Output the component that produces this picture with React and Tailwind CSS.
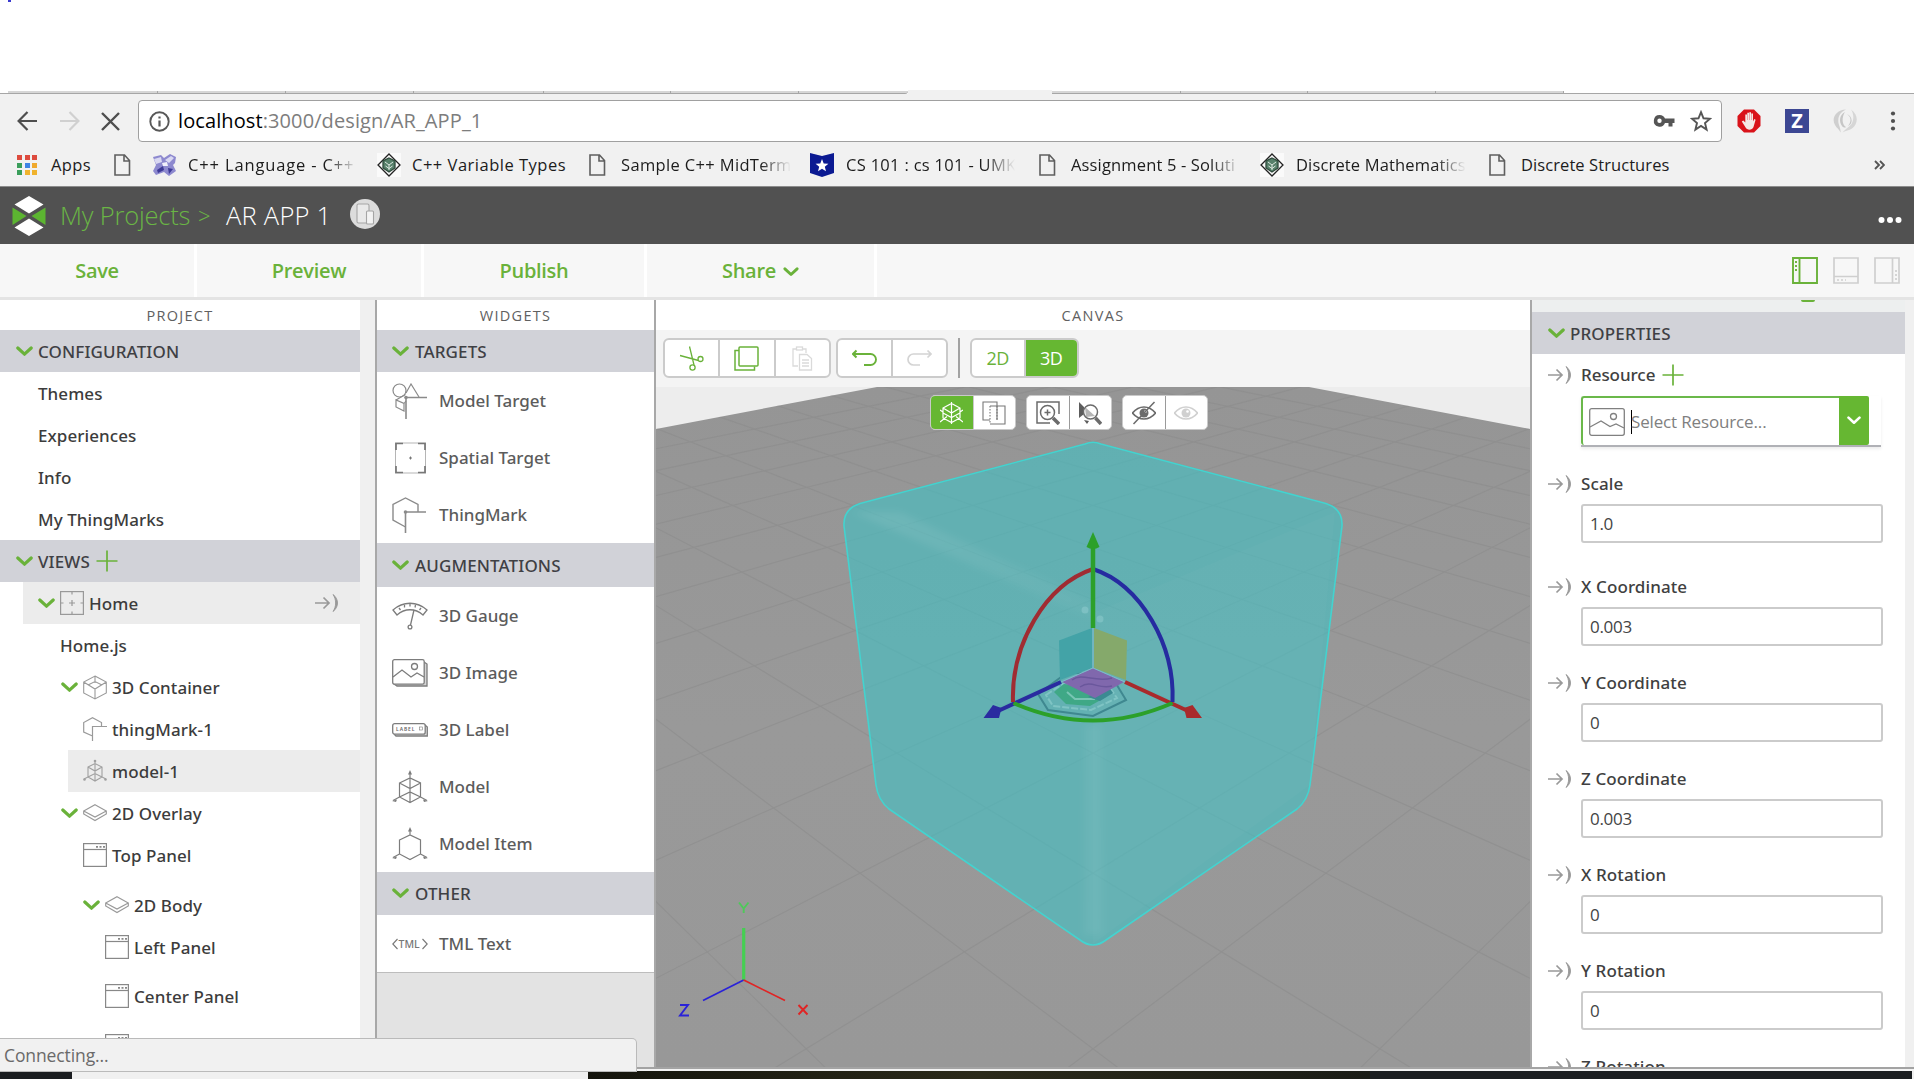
import React from "react";

const GREEN = "#6ab23a";

function Icon({ w, h, vb, className = "", children, stroke = "#8a8a8a", sw = 1.2 }) {
  return (
    <svg
      width={w}
      height={h}
      viewBox={vb || `0 0 ${w} ${h}`}
      className={"shrink-0 block " + className}
      fill="none"
      stroke={stroke}
      strokeWidth={sw}
    >
      {children}
    </svg>
  );
}

const Chevron = ({ className = "", color = GREEN, w = 17, h = 11 }) => (
  <Icon w={w} h={h} vb="0 0 17 11" stroke={color} sw={3.2} className={className}>
    <path d="M1.8 2 L8.5 8.2 L15.2 2" strokeLinecap="round" strokeLinejoin="round" />
  </Icon>
);

const Plus = ({ className = "" }) => (
  <Icon w={22} h={22} stroke={GREEN} sw={1.7} className={className}>
    <path d="M11 0.5V21.5M0.5 11H21.5" />
  </Icon>
);

const Bind = ({ className = "" }) => (
  <Icon w={25} h={20} stroke="#999" sw={1.7} className={className}>
    <path d="M1 10H14.5M9.5 4.5L15 10L9.5 15.5" />
    <path d="M19 1.5C25 6 25 14 19 18.5C22.5 13.5 22.5 6.5 19 1.5Z" fill="#999" strokeWidth="0.9" />
  </Icon>
);

/* ---------- browser chrome ---------- */

const PageIcon = () => (
  <Icon w={17} h={22} stroke="#5f5f5f" sw={1.6}>
    <path d="M1 1H10.5L15.5 6.5V21H1Z M10 1V7H15.5" />
  </Icon>
);

const DiamondIcon = () => (
  <Icon w={24} h={24} stroke="#222" sw={1.3}>
    <rect width="24" height="24" fill="#fafafa" stroke="none" />
    <path d="M12 1L23 12L12 23L1 12Z" />
    <path d="M12 5L18 8V15L12 19L6 15V8Z" fill="#56806a" stroke="#2f4a3c" />
    <path d="M8 9L12 12L16 9M12 12V17M8.5 13L12 15.5L15.500 13" stroke="#dfe9e2" strokeWidth="1" />
  </Icon>
);

const CppIcon = () => (
  <Icon w={25} h={22} stroke="none">
    <path d="M1 3L9 1L12 4L18 0L24 3L23 9L21 11L24 17L17 22L12 18L4 21L1 17L4 11Z" fill="#8d89cf" />
    <path d="M2 5L9 3L10 8L4 10ZM13 6L19 2L22 4L17 9Z" fill="#d9d8f2" />
    <path d="M5 16L11 12L12 16L6 19ZM16 14L21 15L17 20Z" fill="#3e3a97" />
    <path d="M10 9L15 8L16 12L11 12Z" fill="#f0f0fb" />
  </Icon>
);

const ShieldStar = () => (
  <Icon w={24} h={24} stroke="none">
    <path d="M0 0L12 3L24 0V20L12 24L0 20Z" fill="#0b1a92" />
    <path d="M12 6L13.700 10.400L18.400 10.700L14.800 13.700L16 18.300L12 15.700L8 18.300L9.200 13.700L5.600 10.700L10.300 10.400Z" fill="#fff" />
  </Icon>
);

function Bookmark({ icon, label, gap, width, fade, ml, tracking }) {
  return (
    <div className={"flex items-center shrink-0 " + ml}>
      {icon}
      <span
        className={
          "block whitespace-nowrap overflow-hidden text-[16.500px] text-[#1c1c1c] leading-6 " +
          gap + " " + width + " " + tracking + " " +
          (fade ? "[mask-image:linear-gradient(to_right,black_82%,transparent_100%)]" : "")
        }
      >
        {label}
      </span>
    </div>
  );
}

function TabStrip() {
  return (
    <div className="flex h-[4px] shrink-0 mt-[90px] bg-white">
      <div className="w-2 border-b border-[#a6a6a6]" />
      {[150, 128, 128, 130, 127, 128].map((w, i) => (
        <div key={i} style={{ width: w }} className="bg-[#d6d6d6] border-b border-r border-[#a6a6a6] h-[3px] mt-px" />
      ))}
      <div className="w-[109px] bg-[#d6d6d6] border-b border-[#a6a6a6] rounded-br-sm h-[3px] mt-px" />
      <div className="w-[144px] bg-[#f1f1f1]" />
      {[129, 127, 128, 128].map((w, i) => (
        <div key={i} style={{ width: w }} className="bg-[#d6d6d6] border-b border-r border-[#a6a6a6] h-[3px] mt-px" />
      ))}
      <div className="flex-1 border-b border-[#a6a6a6]" />
    </div>
  );
}

function AddressBar() {
  return (
    <div className="flex items-center h-[54px] shrink-0">
      <Icon w={20} h={20} stroke="#4e4e4e" sw={2.2} className="ml-[17px]">
        <path d="M20 10H2M10.500 1L1.600 10L10.500 19" />
      </Icon>
      <Icon w={20} h={20} stroke="#d0d0d0" sw={2.200} className="ml-[23px]">
        <path d="M0 10H18M9.500 1L18.400 10L9.500 19" />
      </Icon>
      <Icon w={19} h={19} stroke="#4e4e4e" sw={2.400} className="ml-[21px]">
        <path d="M1 1L18 18M18 1L1 18" />
      </Icon>
      <div className="ml-[18px] w-[1584px] h-[42px] bg-white border border-[#a0a0a0] rounded-[4px] flex items-center">
        <Icon w={21} h={21} stroke="#585858" sw={1.900} className="ml-[10px]">
          <circle cx="10.500" cy="10.500" r="9.200" />
          <path d="M10.500 9.500V15.500M10.500 5.500V7.600" strokeWidth="2.200" />
        </Icon>
        <div className="ml-[8px] text-[20px] leading-7 text-[#7d7d7d] flex-1 whitespace-nowrap tracking-[0.100px]">
          <span className="text-black">localhost</span>:3000/design/AR_APP_1
        </div>
        <Icon w={22} h={14} stroke="none" className="mr-[15px]">
          <path fillRule="evenodd" d="M6.500 1A5.800 5.800 0 1 0 12 9H15.500V12.500H19.500V9H21.500V4.500H12A5.800 5.800 0 0 0 6.500 1ZM6.500 4.600A2.200 2.200 0 1 1 6.500 9A2.200 2.200 0 1 1 6.500 4.600Z" fill="#555" />
        </Icon>
        <Icon w={22} h={22} stroke="#555" sw={1.900} className="mr-[9px]">
          <path d="M11 2.200L13.500 8.300L20 8.800L15 13L16.600 19.600L11 16L5.400 19.600L7 13L2 8.800L8.500 8.300Z" />
        </Icon>
      </div>
      <Icon w={24} h={24} stroke="none" className="ml-[15px]">
        <path d="M7 0.500H17L23.500 7V17L17 23.500H7L0.500 17V7Z" fill="#d9131a" />
        <path d="M8.300 18L4.800 12.500L6.300 11.500L8.300 13.500V5.500H10V11H10.300V3.700H12V11H12.300V3.200H14V11H14.300V4.500H16V12.500L17.300 10L18.600 10.700L16.500 18C15 21.500 10 21.500 8.300 18Z" fill="#f4e9e6" />
      </Icon>
      <div className="ml-[24px] w-6 h-6 bg-[#3c4793] text-white font-bold text-[20px] leading-6 text-center shrink-0">Z</div>
      <Icon w={24} h={24} stroke="none" className="ml-[24px]">
        <path d="M13 0.500C3 1 -2 9 2 16C3.500 19 6 20 7.500 23.500C8 20 6 17 5.500 14C4.500 8 7 3 13 0.500Z" fill="#cfcfcf" />
        <path d="M18 0.500C26 6 25 15 19 19.500C16 21.500 13 21.500 9.500 23.500C12 20 16 18.500 18.500 15C21 11 21 5 18 0.500Z" fill="#d6d6d6" />
        <path d="M12 3C6 6 6 13 9 17C10 18.500 12 19 13 18C9 16 8.500 8 12 3ZM14 5C18 8 19 12 15 17C20 15 20 8 14 5Z" fill="#c6c6c6" />
      </Icon>
      <Icon w={6} h={20} stroke="none" className="ml-[33px]">
        <circle cx="3" cy="2.500" r="2.100" fill="#505050" />
        <circle cx="3" cy="10" r="2.100" fill="#505050" />
        <circle cx="3" cy="17.500" r="2.100" fill="#505050" />
      </Icon>
    </div>
  );
}

function BookmarksBar() {
  const colors = ["#dd4b3e", "#dd4b3e", "#dd4b3e", "#3a9e5b", "#3f84e5", "#f0a92d", "#3a9e5b", "#f0b32d", "#f0b32d"];
  return (
    <div className="flex items-center h-[38px] shrink-0 pb-[4px]">
      <div className="grid grid-cols-3 gap-[2.500px] ml-[17px] w-5 shrink-0">
        {colors.map((c, i) => (
          <div key={i} className="h-[5px]" style={{ background: c }} />
        ))}
      </div>
      <span className="ml-[14px] w-[63px] text-[16.500px] text-[#1c1c1c] leading-6 tracking-[0.400px]">Apps</span>
      <PageIcon />
      <Bookmark ml="ml-[21px]" icon={<CppIcon />} gap="ml-[11px]" width="w-[170px]" tracking="tracking-[0.850px]" label="C++ Language - C++" fade />
      <Bookmark ml="ml-[19px]" icon={<DiamondIcon />} gap="ml-[11px]" width="w-[160px]" tracking="tracking-[0.500px]" label="C++ Variable Types" />
      <Bookmark ml="ml-[17px]" icon={<PageIcon />} gap="ml-[15px]" width="w-[170px]" tracking="tracking-[0.350px]" label="Sample C++ MidTerm" fade />
      <Bookmark ml="ml-[19px]" icon={<ShieldStar />} gap="ml-[12px]" width="w-[169px]" tracking="tracking-[0.300px]" label="CS 101 : cs 101 - UMK" fade />
      <Bookmark ml="ml-[24px]" icon={<PageIcon />} gap="ml-[15px]" width="w-[170px]" tracking="tracking-[0.150px]" label="Assignment 5 - Soluti" fade />
      <Bookmark ml="ml-[19px]" icon={<DiamondIcon />} gap="ml-[12px]" width="w-[170px]" tracking="tracking-[0.150px]" label="Discrete Mathematics" fade />
      <Bookmark ml="ml-[23px]" icon={<PageIcon />} gap="ml-[15px]" width="w-[170px]" tracking="tracking-[0.080px]" label="Discrete Structures" />
      <Icon w={11} h={10} stroke="#555" sw={1.900} className="ml-auto mr-[29px]">
        <path d="M1 1L5 5L1 9M6 1L10 5L6 9" />
      </Icon>
    </div>
  );
}

/* ---------- application header ---------- */

function AppHeader() {
  return (
    <div className="flex items-center h-[58px] shrink-0 bg-[#515151] border-t border-[#8c8c8c]">
      <Icon w={34} h={40} stroke="none" className="ml-[12px]">
        <path d="M17 0L31.500 8.500L17 17.500L2.500 8.500Z M17 22.500L31.500 31.500L17 40L2.500 31.500Z" fill="#fff" />
        <path d="M0.500 11.500V29L14.500 20Z M33.500 11.500V29L19.500 20Z" fill="#5cb531" />
      </Icon>
      <div className="flex ml-[14px] pb-[2px] text-[25.500px] font-light leading-8 whitespace-nowrap">
        <span className="text-[#6ab545] w-[138px] tracking-[-0.200px]">My Projects</span>
        <span className="text-[#6ab545] w-[28px] text-[22px]">&gt;</span>
        <span className="text-white w-[124px] tracking-[0.250px]">AR APP 1</span>
      </div>
      <Icon w={30} h={30} stroke="#a5a5a5" sw={1.100} className="mb-[4px]">
        <circle cx="15" cy="15" r="15" fill="#dcdcdc" stroke="none" />
        <rect x="7" y="5" width="12" height="19" rx="1.500" fill="#e9e9e9" />
        <rect x="16.500" y="12" width="7" height="13" rx="1" fill="#f3f3f3" />
      </Icon>
      <Icon w={24} h={6} stroke="none" className="ml-auto mr-[12px] mt-[8px]">
        <circle cx="3.500" cy="3" r="3" fill="#fff" />
        <circle cx="12" cy="3" r="3" fill="#fff" />
        <circle cx="20.500" cy="3" r="3" fill="#fff" />
      </Icon>
    </div>
  );
}

function ActionBar() {
  const cell = "h-full flex items-center justify-center border-r-[3px] border-white shrink-0 pt-px ";
  return (
    <div className="flex items-center h-[56px] shrink-0 bg-[#f7f7f7] border-b-[3px] border-[#e4e4e4] text-[20px] font-semibold text-[#6ab23a] tracking-[-0.300px]">
      <div className={cell + "w-[197px]"}>Save</div>
      <div className={cell + "w-[227px]"}>Preview</div>
      <div className={cell + "w-[223px]"}>Publish</div>
      <div className={cell + "w-[230px]"}>
        Share
        <Chevron className="ml-[7px] mt-[2px]" w={16} h={10} />
      </div>
      <div className="ml-auto mr-[14px] flex gap-[15px]">
        <Icon w={26} h={27} stroke={GREEN} sw={1.900}>
          <path d="M1 1H25V26H1ZM7.500 1V26" />
          <path d="M4 4V14" strokeDasharray="2 2" />
        </Icon>
        <Icon w={26} h={27} stroke="#cfcfcf" sw={1.700}>
          <path d="M1 1H25V26H1ZM1 19.500H25" />
          <path d="M4 23H13" strokeDasharray="2 2" />
        </Icon>
        <Icon w={26} h={27} stroke="#cfcfcf" sw={1.700}>
          <path d="M1 1H25V26H1ZM18.500 1V26" />
          <path d="M22 13V23" strokeDasharray="2 2" />
        </Icon>
      </div>
    </div>
  );
}

/* ---------- project tree ---------- */

const PanelTitle = ({ children, className = "" }) => (
  <div className={"h-[30px] shrink-0 bg-white flex items-center justify-center pt-px text-[14.500px] text-[#606060] tracking-[1.300px] " + className}>
    {children}
  </div>
);

const Section = ({ label, className = "h-[42px] pl-[16px]", plus, gap = "ml-[5px]" }) => (
  <div className={"bg-[#d1d2d8] flex items-center shrink-0 text-[17px] font-medium font-['Noto_Sans','Open_Sans',sans-serif] text-[#3f4044] " + className}>
    <Chevron />
    <span className={"tracking-[0.120px] pt-px " + gap}>{label}</span>
    {plus && <Plus className="ml-[6px]" />}
  </div>
);

const ViewIcon = () => (
  <Icon w={24} h={24} stroke="#999" sw={1.200}>
    <rect x="0.600" y="0.600" width="22.800" height="22.800" />
    <path d="M12 1V3.500M12 20.500V23M1 12H3.500M20.500 12H23M12 9V15M9 12H15" />
  </Icon>
);
const ContainerIcon = () => (
  <Icon w={24} h={25} stroke="#9a9a9a" sw={1.100}>
    <path d="M12 1L23.300 7V18L12 24L0.700 18V7ZM12 1V8M0.700 7L12 14L23.300 7M12 14V24M5 10L12 6.500L19 10" />
  </Icon>
);
const MarkSmall = () => (
  <Icon w={24} h={24} stroke="#9a9a9a" sw={1.200}>
    <path d="M9.500 19L0.700 15V5.500L9.500 0.700L18.500 5.500V9.500M9.500 24V9.500H24" />
  </Icon>
);
const ModelSmall = () => (
  <Icon w={24} h={24} stroke="#a0a0a0" sw={1.100}>
    <path d="M12 2V22M5 8L12 4.500L19 8V18L12 22L5 18ZM5 8L12 12L19 8M5 18L12 14.500L19 18M5 18L1 20M19 18L23 20" />
    <circle cx="12" cy="2" r="1.300" fill="#a0a0a0" stroke="none" />
    <circle cx="1.500" cy="20.500" r="1.300" fill="#a0a0a0" stroke="none" />
    <circle cx="22.500" cy="20.500" r="1.300" fill="#a0a0a0" stroke="none" />
  </Icon>
);
const LayersIcon = () => (
  <Icon w={24} h={18} stroke="#999" sw={1.200}>
    <path d="M12 0.800L23.300 7L12 13L0.700 7ZM0.700 7V10L12 16.500L23.300 10V7" />
  </Icon>
);
const WindowIcon = () => (
  <Icon w={24} h={24} stroke="#888" sw={1.200}>
    <rect x="0.600" y="0.600" width="22.800" height="22.800" />
    <path d="M1 6.500H23" />
    <path d="M13 3.800H22" strokeDasharray="2 1.500" strokeWidth="1.800" />
  </Icon>
);

const TreeRow = ({ label, icon, open, pad, className = "h-[42px]", textGap = "ml-[5px]", children }) => (
  <div className={"flex items-center shrink-0 text-[17px] text-[#3c3c3c] font-medium font-['Noto_Sans','Open_Sans',sans-serif] leading-6 tracking-[0.070px] " + pad + " " + className}>
    {open && <Chevron className="mr-[5px]" />}
    {icon}
    <span className={"pt-px " + (icon ? textGap : "")}>{label}</span>
    {children}
  </div>
);

function ProjectPanel() {
  return (
    <div className="w-[375px] shrink-0 flex bg-[#f0f0f0] overflow-hidden">
      <div className="w-[360px] bg-white flex flex-col overflow-hidden">
        <PanelTitle>PROJECT</PanelTitle>
        <Section label="CONFIGURATION" />
        <TreeRow pad="pl-[38px]" label="Themes" />
        <TreeRow pad="pl-[38px]" label="Experiences" />
        <TreeRow pad="pl-[38px]" label="Info" />
        <TreeRow pad="pl-[38px]" label="My ThingMarks" />
        <Section label="VIEWS" plus />
        <TreeRow pad="ml-[23px] pl-[15px] bg-[#ececec]" open icon={<ViewIcon />} label="Home">
          <Bind className="ml-auto mr-[21px]" />
        </TreeRow>
        <TreeRow pad="pl-[60px]" label="Home.js" />
        <TreeRow pad="pl-[61px]" open icon={<ContainerIcon />} label="3D Container" />
        <TreeRow pad="pl-[83px]" icon={<MarkSmall />} label="thingMark-1" />
        <TreeRow pad="ml-[68px] pl-[15px] bg-[#ececec]" icon={<ModelSmall />} label="model-1" />
        <TreeRow pad="pl-[61px]" open icon={<LayersIcon />} label="2D Overlay" />
        <TreeRow pad="pl-[83px]" icon={<WindowIcon />} label="Top Panel" />
        <TreeRow pad="pl-[83px] mt-[8px]" open icon={<LayersIcon />} label="2D Body" />
        <TreeRow pad="pl-[105px]" icon={<WindowIcon />} label="Left Panel" />
        <TreeRow pad="pl-[105px] mt-[7px]" icon={<WindowIcon />} label="Center Panel" />
        <TreeRow pad="pl-[105px] mt-[8px]" icon={<WindowIcon />} label="" />
      </div>
    </div>
  );
}

/* ---------- widgets ---------- */

const ModelTargetIcon = () => (
  <Icon w={36} h={36}>
    <circle cx="7.500" cy="7.500" r="6.500" />
    <path d="M4 17L13.500 11.500M4 17V24L12 28V20.500ZM12 20.500L14 18M14 10L19 1L27 14" />
    <path d="M14 36V14.500H35" strokeWidth="1.600" />
    <circle cx="14" cy="14.500" r="1.800" fill="#8a8a8a" stroke="none" />
  </Icon>
);
const SpatialIcon = () => (
  <Icon w={36} h={36} stroke="#777">
    <rect x="3.500" y="3" width="30" height="30" stroke="#b5b5b5" strokeWidth="1" />
    <path d="M4 10V3.500H11M26 3.500H33V10M33 26V32.500H26M11 32.500H4V26" strokeWidth="1.700" />
    <path d="M18.500 16.500V19.500M17 18H20" strokeWidth="1" />
  </Icon>
);
const ThingMarkIcon = () => (
  <Icon w={36} h={36} sw={1.400}>
    <path d="M13.500 30L1 23V7.500L13.500 1L26 7.500V15" />
    <path d="M13.500 36V15H34" strokeWidth="1.600" />
    <circle cx="13.500" cy="15" r="1.800" fill="#8a8a8a" stroke="none" />
  </Icon>
);
const GaugeIcon = () => (
  <Icon w={36} h={28} stroke="#7c7c7c" sw={1.300}>
    <path d="M1 8C11 -1 25 -1 35 8L31 13C23 6 13 6 5 13Z" />
    <path d="M7 6L8.500 8M12.500 3V5.500M18 2V4.500M23.500 3L23 5.500M29 6L27.500 8M22 8L18.500 23" />
    <circle cx="18" cy="25" r="1.900" />
  </Icon>
);
const ImageIcon = () => (
  <Icon w={36} h={28} stroke="#7c7c7c" sw={1.300}>
    <path d="M32 3L35 5V27H5L2 25" fill="#d5d5d5" />
    <rect x="0.700" y="0.700" width="31.500" height="24.500" rx="1.800" fill="#fff" />
    <path d="M1 18L10 11L19 18L25 14L32 18" />
    <circle cx="22.500" cy="7.500" r="3" />
  </Icon>
);
const LabelIcon = () => (
  <Icon w={36} h={14} stroke="#7c7c7c" sw={1.300}>
    <path d="M33 2L35.300 4V13H4L2 11" fill="#ddd" />
    <rect x="0.700" y="0.700" width="32.500" height="10.500" rx="2" fill="#fff" />
    <text x="4" y="7.800" fontSize="5" fill="#666" stroke="none" letterSpacing="0.900" fontWeight="600">LABEL</text>
    <rect x="27.500" y="4" width="2.800" height="3" strokeWidth="0.600" />
  </Icon>
);
const ModelIcon = () => (
  <Icon w={36} h={34} stroke="#7c7c7c" sw={1.200}>
    <path d="M18 2V32M7.500 13L18 8L28.500 13V27L18 32.500L7.500 27ZM7.500 13L18 18.500L28.500 13M7.500 27L18 22L28.500 27M7.500 27L1 30.500M28.500 27L35 30.500" />
    <path d="M18 0L20 4.500H16ZM0 31L5 29.500L4 32ZM36 31L31 29.500L32 32Z" fill="#7c7c7c" stroke="none" />
  </Icon>
);
const ModelItemIcon = () => (
  <Icon w={36} h={34} stroke="#7c7c7c" sw={1.200}>
    <path d="M18 2V8M7.500 13L18 8L28.500 13V27L18 32.500L7.500 27ZM7.500 27L1 30.500M28.500 27L35 30.500" />
    <path d="M18 0L20 4.500H16ZM0 31L5 29.500L4 32ZM36 31L31 29.500L32 32Z" fill="#7c7c7c" stroke="none" />
  </Icon>
);
const TmlIcon = () => (
  <Icon w={36} h={14} stroke="#777" sw={1.100}>
    <path d="M5.500 2L0.800 7L5.500 12M30.500 2L35.200 7L30.500 12" />
    <text x="6.500" y="11" fontSize="10.500" fill="#777" stroke="none">TML</text>
  </Icon>
);

const Widget = ({ icon, label }) => (
  <div className="h-[57px] shrink-0 flex items-center pl-[15px] text-[17px] font-medium font-['Noto_Sans','Open_Sans',sans-serif] text-[#5c5c5c] tracking-[0px]">
    {icon}
    <span className="ml-[11px]">{label}</span>
  </div>
);

function WidgetsPanel() {
  return (
    <div className="w-[281px] shrink-0 border-x-2 border-[#a8a8a8] bg-[#e3e3e3] flex flex-col">
      <div className="bg-white flex flex-col border-b border-[#bdbdbd]">
        <PanelTitle>WIDGETS</PanelTitle>
        <Section label="TARGETS" className="h-[42px] pl-[15px]" gap="ml-[6px]" />
        <Widget icon={<ModelTargetIcon />} label="Model Target" />
        <Widget icon={<SpatialIcon />} label="Spatial Target" />
        <Widget icon={<ThingMarkIcon />} label="ThingMark" />
        <Section label="AUGMENTATIONS" className="h-[44px] pl-[15px] pt-px" gap="ml-[6px]" />
        <Widget icon={<GaugeIcon />} label="3D Gauge" />
        <Widget icon={<ImageIcon />} label="3D Image" />
        <Widget icon={<LabelIcon />} label="3D Label" />
        <Widget icon={<ModelIcon />} label="Model" />
        <Widget icon={<ModelItemIcon />} label="Model Item" />
        <Section label="OTHER" className="h-[43px] pl-[15px]" gap="ml-[6px]" />
        <Widget icon={<TmlIcon />} label="TML Text" />
      </div>
    </div>
  );
}

/* ---------- canvas ---------- */

function CanvasToolbar() {
  const group = "flex h-[40px] bg-white border-2 border-[#cbcbcb] rounded-[6px] overflow-hidden ";
  const cell = "flex items-center justify-center flex-1 ";
  const div = "border-r-2 border-[#cbcbcb] ";
  return (
    <div className="h-[57px] shrink-0 bg-[#f4f4f4] flex items-start pt-[8px] pl-[7px]">
      <div className={group + "w-[168px]"}>
        <div className={cell + div}>
          <Icon w={25} h={25} stroke={GREEN} sw={1.300}>
            <path d="M1 9.500L19.500 14.500M10.500 0.500L15 19" />
            <circle cx="21.500" cy="13" r="2.500" />
            <circle cx="13.500" cy="21.500" r="2.600" />
          </Icon>
        </div>
        <div className={cell + div}>
          <Icon w={25} h={25} stroke={GREEN} sw={1.500}>
            <path d="M5 4.500H1V24H20.500V20.500" />
            <rect x="5" y="1" width="19" height="19" rx="1" />
          </Icon>
        </div>
        <div className={cell}>
          <Icon w={25} h={25} stroke="#dadada" sw={1.300}>
            <path d="M8 20H3V3H16V7" />
            <rect x="6.500" y="1" width="6" height="3" fill="#fff" />
            <path d="M9.500 8.500H17L21.500 12.500V24H9.500ZM12 14H19M12 17H19M12 20H19" fill="#fff" />
          </Icon>
        </div>
      </div>
      <div className={group + "w-[112px] ml-[5px]"}>
        <div className={cell + div}>
          <Icon w={25} h={18} stroke={GREEN} sw={1.900}>
            <path d="M1 5H18.500A5.500 5.500 0 0 1 18.500 16H12" />
            <path d="M4.500 1.500L1 5L4.500 8.500" strokeWidth="2" />
          </Icon>
        </div>
        <div className={cell}>
          <Icon w={25} h={18} stroke="#d4d4d4" sw={1.700}>
            <path d="M24 5H6.500A5.500 5.500 0 0 0 6.500 16H13M20.500 1.500L24 5L20.500 8.500" />
          </Icon>
        </div>
      </div>
      <div className="w-[2px] h-[40px] bg-[#a2a2a2] ml-[10px]" />
      <div className={group + "w-[109px] ml-[10px] text-[18px] tracking-[-0.500px]"}>
        <div className={cell + div + "text-[#6ab23a]"}>2D</div>
        <div className={cell + "bg-[#66b732] text-white"}>3D</div>
      </div>
    </div>
  );
}

/* Floor grid: two families of lines that meet at the vanishing points. */
const VPX = 2333;
const VPY = 114;
const gridLines = [];
for (let n = -4; n <= 10; n++) {
  const y = VPY + 1 / (0.001157 + 0.000183 * n);
  gridLines.push([656, y, VPX, VPY]);
  gridLines.push([1530, y, 2186 - VPX, VPY]);
}

const CUBE =
  "M1085 444Q1093 440.500 1101 444L1326 503.500Q1343 509 1342 526L1310 785Q1308 800 1297 809L1106 940Q1093 950 1080 940L889 809Q878 800 876 785L844 526Q843 509 860 503.500Z";

function Scene() {
  return (
    <svg className="block w-[874px] h-[680px]" viewBox="656 387 874 680" fill="none">
      <defs>
        <linearGradient id="floor" x1="0" y1="0" x2="0" y2="1">
          <stop offset="0" stopColor="#959595" />
          <stop offset="0.500" stopColor="#999999" />
          <stop offset="1" stopColor="#989898" />
        </linearGradient>
        <clipPath id="floorClip">
          <path d="M656 429L877 387H1309L1530 429V1067H656Z" />
        </clipPath>
        <linearGradient id="sheen" x1="860" y1="510" x2="1093" y2="610" gradientUnits="userSpaceOnUse">
          <stop offset="0" stopColor="#fff" stopOpacity="0.080" />
          <stop offset="1" stopColor="#fff" stopOpacity="0.030" />
        </linearGradient>
        <filter id="soft" x="-20%" y="-20%" width="140%" height="140%">
          <feGaussianBlur stdDeviation="3.500" />
        </filter>
      </defs>
      <rect x="656" y="387" width="874" height="680" fill="#ededed" />
      <path d="M656 429L877 387H1309L1530 429V1067H656Z" fill="url(#floor)" />
      <g clipPath="url(#floorClip)" stroke="#8b8b8b" strokeWidth="1.200" opacity="0.550">
        {gridLines.map(([x1, y1, x2, y2], i) => (
          <path key={i} d={`M${x1} ${y1}L${x2} ${y2}`} />
        ))}
      </g>

      <path d={CUBE} fill="#3fc1c4" fillOpacity="0.600" stroke="#43d3cf" strokeWidth="1.600" />
      <g filter="url(#soft)">
        <path d="M852 512L900 512L1095 603L1093 619Z" fill="url(#sheen)" />
        <path d="M1085 725L1101 725L1103 935L1084 935Z" fill="#fff" fillOpacity="0.050" />
      </g>
      <path d="M1093 613L1335 512L1310 785L1093 944Z" fill="#fff" fillOpacity="0.020" />
      <circle cx="1085" cy="610" r="3.500" fill="#a5dadd" fillOpacity="0.350" />
      <circle cx="1100" cy="619" r="3.500" fill="#a5dadd" fillOpacity="0.350" />

      <g stroke="#3f8890" strokeWidth="2">
        <path d="M1038 694L1068 672L1112 677L1126 700L1093 716L1048 710Z" />
        <path d="M1046 695L1070 679L1106 682L1117 698L1091 710L1053 706Z" stroke="#7fc4c4" strokeDasharray="7 2" />
        <path d="M1054 692L1064 684L1092 688L1106 697L1090 706L1066 704Z" fill="#3fa886" stroke="none" />
        <path d="M1067 692L1075 699L1095 699" stroke="#79c5b4" />
        <path d="M1088 697L1108 686L1113 693L1100 701Z" fill="#3b8a92" stroke="none" />
      </g>

      <path d="M1059 640.500L1092 628V668L1060 680Z" fill="#43a3a7" />
      <path d="M1094 628L1127 640.500L1126 680L1094 668Z" fill="#85a96b" />
      <path d="M1093 668L1124 682L1095 698L1062 682Z" fill="#8068ad" />
      <path d="M1072 680C1082 672 1095 683 1112 678M1080 687C1092 679 1098 690 1112 686" stroke="#6a579c" strokeWidth="1.400" />
      <path d="M1093 628V668L1061 682M1093 668L1125 682" stroke="#7fb9cc" strokeWidth="1" />

      <path d="M1061 682L998 711" stroke="#2a2ba0" strokeWidth="4" />
      <path d="M1125 682L1188 711" stroke="#a92a2c" strokeWidth="4" />
      <path d="M983.500 718L993 705L1001.500 708L999 718Z" fill="#2a2ba0" />
      <path d="M1202 718L1192.500 705L1184 708L1186.500 718Z" fill="#a92a2c" />
      <path d="M1013.500 703Q1093 738 1172.500 703" stroke="#2ca02a" strokeWidth="4" />
      <path d="M1093 569C1045 585 1011 645 1013 702" stroke="#a02c32" strokeWidth="4" />
      <path d="M1093 569C1141 585 1175 645 1172.500 702" stroke="#262ba0" strokeWidth="4" />
      <path d="M1093 628V545" stroke="#2ca02a" strokeWidth="4.500" />
      <path d="M1093 532L1099.500 547Q1093 551 1086.500 547Z" fill="#2ca02a" />

      <path d="M743.700 980V928" stroke="#45cf52" strokeWidth="3.200" />
      <path d="M743.700 980L703 1000.500" stroke="#2a22d8" strokeWidth="1.700" />
      <path d="M743.700 980L785 1000.500" stroke="#e02424" strokeWidth="1.700" />
      <g strokeWidth="1.900">
        <path d="M739 902.500L743.700 908.500L748.500 902.500M743.700 908V913" stroke="#4fc85a" />
        <path d="M680 1005H688L680 1015.500H689" stroke="#2a22d8" />
        <path d="M798.500 1005L807.500 1014.500M807.500 1005L798.500 1014.500" stroke="#e02424" />
      </g>
    </svg>
  );
}

function ViewToggles() {
  const group = "flex w-[86px] h-[35px] bg-white border border-[#c9c9c9] rounded-[5px] overflow-hidden ";
  const cell = "flex-1 flex items-center justify-center ";
  return (
    <div className="absolute left-[274px] top-[8px] flex gap-[10px]">
      <div className={group}>
        <div className={cell + "bg-[#66b732]"}>
          <Icon w={23} h={24} stroke="#fff" sw={1.200}>
            <path d="M11.500 1V23M3 7L11.500 2.500L20 7V17L11.500 21.500L3 17ZM3 7L11.500 12L20 7M3 12L11.500 16.500L20 12M0 21L7 15.500M23 21L16 15.500M0 9L3 11M23 9L20 11" />
          </Icon>
        </div>
        <div className={cell + "border-l border-[#c9c9c9]"}>
          <Icon w={24} h={24} stroke="#777" sw={1.100}>
            <path d="M8 19H1V1H15V19M8 5H23V23H8" />
            <path d="M8 5V23M15 5V19" strokeDasharray="1.500 1.500" />
          </Icon>
        </div>
      </div>
      <div className={group}>
        <div className={cell}>
          <Icon w={24} h={24} stroke="#6b6b6b" sw={1.500}>
            <path d="M14 22H1V1H23V13" />
            <circle cx="11.500" cy="11.500" r="7" />
            <path d="M11.500 8.500V14.500M8.500 11.500H14.500" />
            <path d="M17 17L23 23" strokeWidth="3.500" />
          </Icon>
        </div>
        <div className={cell + "border-l border-[#9a9a9a]"}>
          <Icon w={24} h={24} stroke="#6b6b6b" sw={1.500}>
            <path d="M1 1L6 6V13L1 17ZM6 19L9 23L11 20Z" fill="#5c5c5c" stroke="none" />
            <path d="M7 6L17 15L8 16Z" fill="#b5b5b5" stroke="none" />
            <circle cx="12.500" cy="11" r="7" />
            <path d="M17.500 17L23 23" strokeWidth="3.500" />
          </Icon>
        </div>
      </div>
      <div className={group}>
        <div className={cell}>
          <Icon w={24} h={24} stroke="#6b6b6b" sw={1.700}>
            <path d="M0.500 12C7 4 17 4 23.500 12C17 20 7 20 0.500 12Z" />
            <circle cx="12" cy="12" r="4.500" fill="#6b6b6b" stroke="none" />
            <circle cx="13.500" cy="10.500" r="1.300" fill="#fff" stroke="none" />
            <path d="M1.500 23L22.500 1" strokeWidth="1.500" />
          </Icon>
        </div>
        <div className={cell + "border-l border-[#9a9a9a]"}>
          <Icon w={24} h={24} stroke="#d0d0d0" sw={1.700}>
            <path d="M0.500 12C7 4 17 4 23.500 12C17 20 7 20 0.500 12Z" />
            <circle cx="12" cy="12" r="4.500" fill="#d0d0d0" stroke="none" />
            <circle cx="13.500" cy="10.500" r="1.300" fill="#fff" stroke="none" />
          </Icon>
        </div>
      </div>
    </div>
  );
}

function CanvasPanel() {
  return (
    <div className="w-[874px] shrink-0 flex flex-col bg-white">
      <PanelTitle>CANVAS</PanelTitle>
      <CanvasToolbar />
      <div className="relative overflow-hidden">
        <Scene />
        <ViewToggles />
      </div>
    </div>
  );
}

/* ---------- properties ---------- */

const Field = ({ label, value, className = "" }) => (
  <div className={"shrink-0 " + className}>
    <div className="flex items-center h-[26px] text-[17px] font-medium font-['Noto_Sans','Open_Sans',sans-serif] text-[#404040] tracking-[0.100px]">
      <Bind className="ml-[15px]" />
      <span className="ml-[9px] pb-px">{label}</span>
    </div>
    {value !== undefined && (
      <div className="ml-[49px] mt-[7px] w-[302px] h-[39px] border-2 border-[#cbcbcb] rounded-[3px] flex items-center pl-[7px] text-[17px] text-[#444] tracking-[-0.300px]">
        {value}
      </div>
    )}
  </div>
);

function PropertiesPanel() {
  return (
    <div className="flex-1 flex bg-[#f0f0f0] border-l-2 border-[#a8a8a8] overflow-hidden">
      <div className="w-[373px] bg-white flex flex-col overflow-hidden">
        <div className="h-[12px] shrink-0 bg-[#edefef] flex justify-center">
          <div className="w-[14px] h-[2px] bg-[#6ab23a] rounded-b-full ml-[179px]" />
        </div>
        <Section label="PROPERTIES" className="h-[42px] pl-[16px]" />
        <div className="flex items-center h-[42px] shrink-0 text-[17px] font-medium font-['Noto_Sans','Open_Sans',sans-serif] text-[#404040] tracking-[-0.050px]">
          <Bind className="ml-[15px]" />
          <span className="ml-[9px] w-[81px]">Resource</span>
          <Plus />
        </div>
        <div className="ml-[49px] w-[300px] h-[51px] shrink-0 flex border-b-2 border-[#b0b1b6] shadow-[0_2px_3px_rgba(0,0,0,0.08)]">
          <div className="w-[258px] border-2 border-r-0 border-b-0 border-[#6ab84a] rounded-l-[3px] flex items-center pl-[6px]">
            <Icon w={36} h={28} stroke="#808080" sw={1.300}>
              <rect x="0.700" y="0.700" width="34.600" height="26.600" rx="2" />
              <path d="M1 19L12 13L21 18.500L27 16L35 20" />
              <circle cx="24.500" cy="8.500" r="3" />
            </Icon>
            <div className="w-px h-6 bg-black ml-[6px]" />
            <span className="text-[17px] text-[#808080] tracking-[-0.150px] -ml-px">Select Resource...</span>
          </div>
          <div className="w-[30px] bg-[#66b732] rounded-r-[2px] flex items-center justify-center">
            <Chevron color="#fff" w={14} h={9} />
          </div>
        </div>
        <Field className="mt-[24px]" label="Scale" value="1.0" />
        <Field className="mt-[31px]" label="X Coordinate" value="0.003" />
        <Field className="mt-[24px]" label="Y Coordinate" value="0" />
        <Field className="mt-[24px]" label="Z Coordinate" value="0.003" />
        <Field className="mt-[24px]" label="X Rotation" value="0" />
        <Field className="mt-[24px]" label="Y Rotation" value="0" />
        <Field className="mt-[24px]" label="Z Rotation" />
      </div>
    </div>
  );
}

export default function App() {
  return (
    <div className="relative w-[1914px] h-[1079px] overflow-hidden bg-[#f1f1f1] flex flex-col font-['Open_Sans','Noto_Sans',sans-serif]">
      <div className="absolute left-[8px] top-0 w-[3px] h-[2px] bg-[#3a3ad0]" />
      <div className="bg-white shrink-0">
        <TabStrip />
      </div>
      <AddressBar />
      <BookmarksBar />
      <AppHeader />
      <ActionBar />
      <div className="flex h-[767px] shrink-0 overflow-hidden">
        <ProjectPanel />
        <WidgetsPanel />
        <CanvasPanel />
        <PropertiesPanel />
      </div>
      <div className="h-[2px] shrink-0 bg-[#a3a3a3]" />
      <div className="h-[2px] shrink-0 bg-[#f3f3f3]" />
      <div className="flex flex-1 bg-[#f0f0f0]">
        <div className="w-[72px] bg-[#1a1d20]" />
        <div className="w-[516px]" />
        <div className="w-[782px] bg-linear-to-r from-[#14140c] via-[#2b2a1a] to-[#1a1c16]" />
        <div className="flex-1 bg-[#1a1d20] mr-[2px]" />
      </div>
      <div className="absolute left-0 top-[1038px] w-[637px] h-[34px] bg-[#f1f1f1] border-t border-r border-b border-[#bababa] rounded-tr-[5px] flex items-center pl-[4px] text-[17.500px] text-[#6a6a6a] tracking-[-0.100px]">
        Connecting...
      </div>
    </div>
  );
}
